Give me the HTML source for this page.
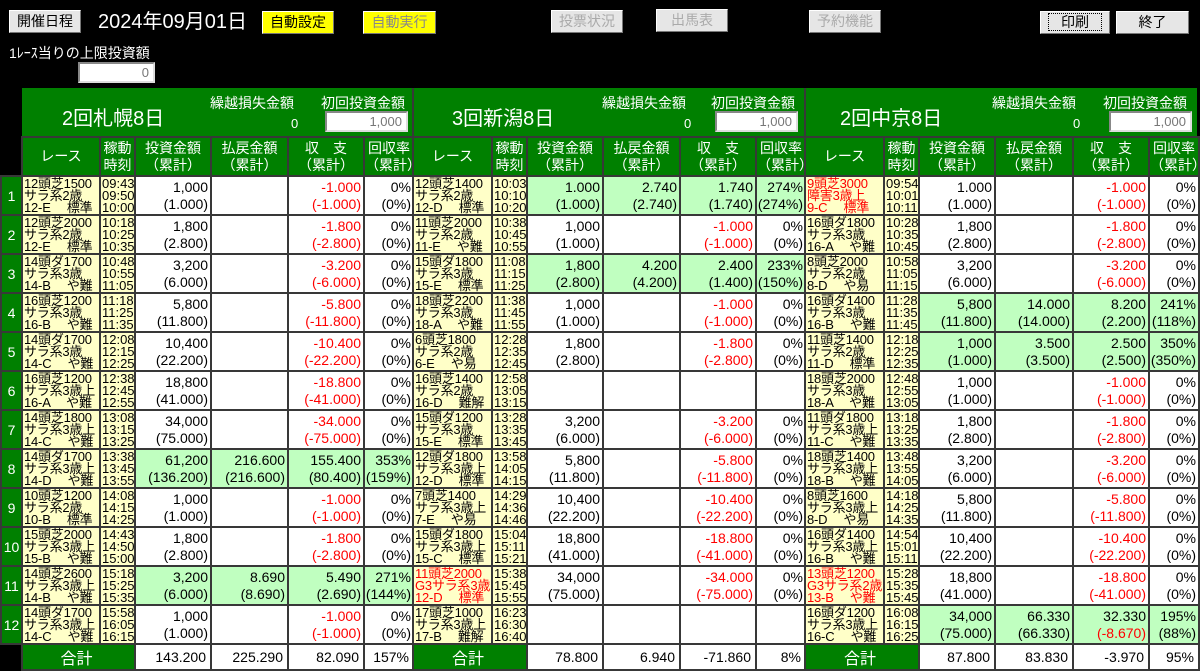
<!DOCTYPE html>
<html><head><meta charset="utf-8"><style>
*{box-sizing:border-box;margin:0;padding:0}
body{width:1200px;height:668px;background:#000;position:relative;overflow:hidden;font-family:"Liberation Sans","Noto Sans CJK JP",sans-serif;color:#000}
.btn{position:absolute;height:23px;background:#e6e6e6;border:1px solid #fff;border-right-color:#777;border-bottom-color:#777;font-size:14px;text-align:center;line-height:21px;color:#000}
.dis{color:#aaa}
.yel{background:#ffff00}
.abs{position:absolute}
.inp{position:absolute;background:#fff;border:2px solid #888;border-right-color:#ddd;border-bottom-color:#ddd;text-align:right;font-size:13px;color:#777;padding-right:4px;line-height:17px}
.hdr{position:absolute;top:88px;height:50px;background:#008000;color:#fff}
table{position:absolute;border-collapse:collapse;table-layout:fixed}
td{border:2px solid #383838;padding:0;vertical-align:middle;overflow:hidden;white-space:nowrap}
tr{height:39px}
.h td{background:#008000;color:#fff;font-size:14px;line-height:17px;text-align:center}
.rc{background:#ffffc8;font-size:13px;line-height:12px;padding-left:1px;text-align:left;letter-spacing:-0.2px}
.tm{background:#ffffc8;font-size:13px;line-height:12px;padding-left:1px}
.n{background:#fff;font-size:14px;line-height:17px;text-align:right;padding-right:2px}
.g .n{background:#c0ffc0}
.red,.red td{color:#f00}
.rc.red{color:#f00}
.t{height:24px}
.t td{background:#fff;font-size:14px;text-align:right;padding-right:4px}
.t td.tl{background:#008000;color:#fff;text-align:center;font-size:16px}
.num td{background:#008000;color:#fff;font-size:14px;text-align:center}
</style></head><body>
<div class="btn" style="left:9px;top:10px;width:72px">開催日程</div>
<div class="abs" style="left:98px;top:9px;color:#fff;font-size:20px;line-height:26px">2024年09月01日</div>
<div class="btn yel" style="left:262px;top:11px;width:72px">自動設定</div>
<div class="btn yel dis" style="left:363px;top:11px;width:73px;color:#888">自動実行</div>
<div class="btn dis" style="left:551px;top:10px;width:72px">投票状況</div>
<div class="btn dis" style="left:656px;top:9px;width:72px">出馬表</div>
<div class="btn dis" style="left:809px;top:10px;width:72px">予約機能</div>
<div class="btn" style="left:1040px;top:11px;width:70px"><span style="border:1px dotted #000;padding:0 12px">印刷</span></div>
<div class="btn" style="left:1116px;top:11px;width:73px">終了</div>
<div class="abs" style="left:9px;top:43px;color:#fff;font-size:14px">1ﾚｰｽ当りの上限投資額</div>
<div class="inp" style="left:78px;top:62px;width:77px;height:21px">0</div>

<div class="hdr" style="left:22px;width:1175px"></div>
<div class="abs" style="left:412px;top:88px;width:2px;height:88px;background:#383838"></div>
<div class="abs" style="left:804px;top:88px;width:2px;height:88px;background:#383838"></div>

<div class="abs" style="left:62px;top:102px;color:#fff;font-size:20px">2回札幌8日</div>
<div class="abs" style="left:210px;top:93px;color:#fff;font-size:14px">繰越損失金額</div>
<div class="abs" style="left:291px;top:116px;color:#fff;font-size:13px">0</div>
<div class="abs" style="left:321px;top:93px;color:#fff;font-size:14px">初回投資金額</div>
<div class="inp" style="left:325px;top:111px;width:83px;height:21px">1,000</div>

<div class="abs" style="left:452px;top:102px;color:#fff;font-size:20px">3回新潟8日</div>
<div class="abs" style="left:602px;top:93px;color:#fff;font-size:14px">繰越損失金額</div>
<div class="abs" style="left:684px;top:116px;color:#fff;font-size:13px">0</div>
<div class="abs" style="left:711px;top:93px;color:#fff;font-size:14px">初回投資金額</div>
<div class="inp" style="left:715px;top:111px;width:83px;height:21px">1,000</div>

<div class="abs" style="left:840px;top:102px;color:#fff;font-size:20px">2回中京8日</div>
<div class="abs" style="left:992px;top:93px;color:#fff;font-size:14px">繰越損失金額</div>
<div class="abs" style="left:1073px;top:116px;color:#fff;font-size:13px">0</div>
<div class="abs" style="left:1103px;top:93px;color:#fff;font-size:14px">初回投資金額</div>
<div class="inp" style="left:1109px;top:111px;width:83px;height:21px">1,000</div>

<table style="left:0;top:175px;width:21px" class="num">
<colgroup><col style="width:21px"></colgroup>
<tr><td>1</td></tr><tr><td>2</td></tr><tr><td>3</td></tr><tr><td>4</td></tr><tr><td>5</td></tr><tr><td>6</td></tr><tr><td>7</td></tr><tr><td>8</td></tr><tr><td>9</td></tr><tr><td>10</td></tr><tr><td>11</td></tr><tr><td>12</td></tr>
</table>

<!-- Block 1 -->
<table style="left:21px;top:136px;width:392px">
<colgroup><col style="width:78px"><col style="width:35px"><col style="width:76px"><col style="width:77px"><col style="width:76px"><col style="width:50px"></colgroup>
<tr class="h"><td>レース</td><td>稼動<br>時刻</td><td>投資金額<br>（累計）</td><td>払戻金額<br>（累計）</td><td>収　支<br>（累計）</td><td>回収率<br>（累計）</td></tr>
<tr><td class="rc">12頭芝1500<br>サラ系2歳<br>12-E　 標準</td><td class="tm">09:43<br>09:50<br>10:00</td><td class="n">1,000<br>(1.000)</td><td class="n"></td><td class="n red">-1.000<br>(-1.000)</td><td class="n">0%<br>(0%)</td></tr>
<tr><td class="rc">12頭芝2000<br>サラ系2歳<br>12-E　 標準</td><td class="tm">10:18<br>10:25<br>10:35</td><td class="n">1,800<br>(2.800)</td><td class="n"></td><td class="n red">-1.800<br>(-2.800)</td><td class="n">0%<br>(0%)</td></tr>
<tr><td class="rc">14頭ダ1700<br>サラ系3歳<br>14-B　 や難</td><td class="tm">10:48<br>10:55<br>11:05</td><td class="n">3,200<br>(6.000)</td><td class="n"></td><td class="n red">-3.200<br>(-6.000)</td><td class="n">0%<br>(0%)</td></tr>
<tr><td class="rc">16頭芝1200<br>サラ系3歳<br>16-B　 や難</td><td class="tm">11:18<br>11:25<br>11:35</td><td class="n">5,800<br>(11.800)</td><td class="n"></td><td class="n red">-5.800<br>(-11.800)</td><td class="n">0%<br>(0%)</td></tr>
<tr><td class="rc">14頭ダ1700<br>サラ系3歳<br>14-C　 や難</td><td class="tm">12:08<br>12:15<br>12:25</td><td class="n">10,400<br>(22.200)</td><td class="n"></td><td class="n red">-10.400<br>(-22.200)</td><td class="n">0%<br>(0%)</td></tr>
<tr><td class="rc">16頭芝1200<br>サラ系3歳上<br>16-A　 や難</td><td class="tm">12:38<br>12:45<br>12:55</td><td class="n">18,800<br>(41.000)</td><td class="n"></td><td class="n red">-18.800<br>(-41.000)</td><td class="n">0%<br>(0%)</td></tr>
<tr><td class="rc">14頭芝1800<br>サラ系3歳上<br>14-C　 や難</td><td class="tm">13:08<br>13:15<br>13:25</td><td class="n">34,000<br>(75.000)</td><td class="n"></td><td class="n red">-34.000<br>(-75.000)</td><td class="n">0%<br>(0%)</td></tr>
<tr class="g"><td class="rc">14頭ダ1700<br>サラ系3歳上<br>14-D　 や難</td><td class="tm">13:38<br>13:45<br>13:55</td><td class="n">61,200<br>(136.200)</td><td class="n">216.600<br>(216.600)</td><td class="n">155.400<br>(80.400)</td><td class="n">353%<br>(159%)</td></tr>
<tr><td class="rc">10頭芝1200<br>サラ系2歳<br>10-B　 標準</td><td class="tm">14:08<br>14:15<br>14:25</td><td class="n">1,000<br>(1.000)</td><td class="n"></td><td class="n red">-1.000<br>(-1.000)</td><td class="n">0%<br>(0%)</td></tr>
<tr><td class="rc">15頭芝2000<br>サラ系3歳上<br>15-B　 や難</td><td class="tm">14:43<br>14:50<br>15:00</td><td class="n">1,800<br>(2.800)</td><td class="n"></td><td class="n red">-1.800<br>(-2.800)</td><td class="n">0%<br>(0%)</td></tr>
<tr class="g"><td class="rc">14頭芝2600<br>サラ系3歳上<br>14-B　 や難</td><td class="tm">15:18<br>15:25<br>15:35</td><td class="n">3,200<br>(6.000)</td><td class="n">8.690<br>(8.690)</td><td class="n">5.490<br>(2.690)</td><td class="n">271%<br>(144%)</td></tr>
<tr><td class="rc">14頭ダ1700<br>サラ系3歳上<br>14-C　 や難</td><td class="tm">15:58<br>16:05<br>16:15</td><td class="n">1,000<br>(1.000)</td><td class="n"></td><td class="n red">-1.000<br>(-1.000)</td><td class="n">0%<br>(0%)</td></tr>
<tr class="t"><td class="tl" colspan="2">合計</td><td>143.200</td><td>225.290</td><td>82.090</td><td>157%</td></tr>
</table>

<!-- Block 2 -->
<table style="left:412px;top:136px;width:393px">
<colgroup><col style="width:79px"><col style="width:35px"><col style="width:76px"><col style="width:77px"><col style="width:76px"><col style="width:50px"></colgroup>
<tr class="h"><td>レース</td><td>稼動<br>時刻</td><td>投資金額<br>（累計）</td><td>払戻金額<br>（累計）</td><td>収　支<br>（累計）</td><td>回収率<br>（累計）</td></tr>
<tr class="g"><td class="rc">12頭芝1400<br>サラ系2歳<br>12-D　 標準</td><td class="tm">10:03<br>10:10<br>10:20</td><td class="n">1.000<br>(1.000)</td><td class="n">2.740<br>(2.740)</td><td class="n">1.740<br>(1.740)</td><td class="n">274%<br>(274%)</td></tr>
<tr><td class="rc">11頭芝2000<br>サラ系2歳<br>11-E　 や難</td><td class="tm">10:38<br>10:45<br>10:55</td><td class="n">1,000<br>(1.000)</td><td class="n"></td><td class="n red">-1.000<br>(-1.000)</td><td class="n">0%<br>(0%)</td></tr>
<tr class="g"><td class="rc">15頭ダ1800<br>サラ系3歳<br>15-E　 標準</td><td class="tm">11:08<br>11:15<br>11:25</td><td class="n">1,800<br>(2.800)</td><td class="n">4.200<br>(4.200)</td><td class="n">2.400<br>(1.400)</td><td class="n">233%<br>(150%)</td></tr>
<tr><td class="rc">18頭芝2200<br>サラ系3歳<br>18-A　 や難</td><td class="tm">11:38<br>11:45<br>11:55</td><td class="n">1,000<br>(1.000)</td><td class="n"></td><td class="n red">-1.000<br>(-1.000)</td><td class="n">0%<br>(0%)</td></tr>
<tr><td class="rc">6頭芝1800<br>サラ系2歳<br>6-E　 や易</td><td class="tm">12:28<br>12:35<br>12:45</td><td class="n">1,800<br>(2.800)</td><td class="n"></td><td class="n red">-1.800<br>(-2.800)</td><td class="n">0%<br>(0%)</td></tr>
<tr><td class="rc">16頭芝1400<br>サラ系2歳<br>16-D　 難解</td><td class="tm">12:58<br>13:05<br>13:15</td><td class="n"></td><td class="n"></td><td class="n"></td><td class="n"></td></tr>
<tr><td class="rc">15頭ダ1200<br>サラ系3歳<br>15-E　 標準</td><td class="tm">13:28<br>13:35<br>13:45</td><td class="n">3,200<br>(6.000)</td><td class="n"></td><td class="n red">-3.200<br>(-6.000)</td><td class="n">0%<br>(0%)</td></tr>
<tr><td class="rc">12頭ダ1800<br>サラ系3歳上<br>12-D　 標準</td><td class="tm">13:58<br>14:05<br>14:15</td><td class="n">5,800<br>(11.800)</td><td class="n"></td><td class="n red">-5.800<br>(-11.800)</td><td class="n">0%<br>(0%)</td></tr>
<tr><td class="rc">7頭芝1400<br>サラ系3歳上<br>7-E　 や易</td><td class="tm">14:29<br>14:36<br>14:46</td><td class="n">10,400<br>(22.200)</td><td class="n"></td><td class="n red">-10.400<br>(-22.200)</td><td class="n">0%<br>(0%)</td></tr>
<tr><td class="rc">15頭ダ1800<br>サラ系3歳上<br>15-C　 標準</td><td class="tm">15:04<br>15:11<br>15:21</td><td class="n">18,800<br>(41.000)</td><td class="n"></td><td class="n red">-18.800<br>(-41.000)</td><td class="n">0%<br>(0%)</td></tr>
<tr><td class="rc red">11頭芝2000<br>G3サラ系3歳<br>12-D　 標準</td><td class="tm">15:38<br>15:45<br>15:55</td><td class="n">34,000<br>(75.000)</td><td class="n"></td><td class="n red">-34.000<br>(-75.000)</td><td class="n">0%<br>(0%)</td></tr>
<tr><td class="rc">17頭芝1000<br>サラ系3歳上<br>17-B　 難解</td><td class="tm">16:23<br>16:30<br>16:40</td><td class="n"></td><td class="n"></td><td class="n"></td><td class="n"></td></tr>
<tr class="t"><td class="tl" colspan="2">合計</td><td>78.800</td><td>6.940</td><td>-71.860</td><td>8%</td></tr>
</table>

<!-- Block 3 -->
<table style="left:804px;top:136px;width:394px">
<colgroup><col style="width:79px"><col style="width:35px"><col style="width:76px"><col style="width:78px"><col style="width:76px"><col style="width:50px"></colgroup>
<tr class="h"><td>レース</td><td>稼動<br>時刻</td><td>投資金額<br>（累計）</td><td>払戻金額<br>（累計）</td><td>収　支<br>（累計）</td><td>回収率<br>（累計）</td></tr>
<tr><td class="rc red">9頭芝3000<br>障害3歳上<br>9-C　 標準</td><td class="tm">09:54<br>10:01<br>10:11</td><td class="n">1.000<br>(1.000)</td><td class="n"></td><td class="n red">-1.000<br>(-1.000)</td><td class="n">0%<br>(0%)</td></tr>
<tr><td class="rc">16頭ダ1800<br>サラ系3歳<br>16-A　 や難</td><td class="tm">10:28<br>10:35<br>10:45</td><td class="n">1,800<br>(2.800)</td><td class="n"></td><td class="n red">-1.800<br>(-2.800)</td><td class="n">0%<br>(0%)</td></tr>
<tr><td class="rc">8頭芝2000<br>サラ系2歳<br>8-D　 や易</td><td class="tm">10:58<br>11:05<br>11:15</td><td class="n">3,200<br>(6.000)</td><td class="n"></td><td class="n red">-3.200<br>(-6.000)</td><td class="n">0%<br>(0%)</td></tr>
<tr class="g"><td class="rc">16頭ダ1400<br>サラ系3歳<br>16-B　 や難</td><td class="tm">11:28<br>11:35<br>11:45</td><td class="n">5,800<br>(11.800)</td><td class="n">14.000<br>(14.000)</td><td class="n">8.200<br>(2.200)</td><td class="n">241%<br>(118%)</td></tr>
<tr class="g"><td class="rc">11頭芝1400<br>サラ系2歳<br>11-D　 標準</td><td class="tm">12:18<br>12:25<br>12:35</td><td class="n">1,000<br>(1.000)</td><td class="n">3.500<br>(3.500)</td><td class="n">2.500<br>(2.500)</td><td class="n">350%<br>(350%)</td></tr>
<tr><td class="rc">18頭芝2000<br>サラ系3歳<br>18-A　 や難</td><td class="tm">12:48<br>12:55<br>13:05</td><td class="n">1,000<br>(1.000)</td><td class="n"></td><td class="n red">-1.000<br>(-1.000)</td><td class="n">0%<br>(0%)</td></tr>
<tr><td class="rc">11頭ダ1800<br>サラ系3歳上<br>11-C　 や難</td><td class="tm">13:18<br>13:25<br>13:35</td><td class="n">1,800<br>(2.800)</td><td class="n"></td><td class="n red">-1.800<br>(-2.800)</td><td class="n">0%<br>(0%)</td></tr>
<tr><td class="rc">18頭芝1400<br>サラ系3歳上<br>18-B　 や難</td><td class="tm">13:48<br>13:55<br>14:05</td><td class="n">3,200<br>(6.000)</td><td class="n"></td><td class="n red">-3.200<br>(-6.000)</td><td class="n">0%<br>(0%)</td></tr>
<tr><td class="rc">8頭芝1600<br>サラ系3歳上<br>8-D　 や易</td><td class="tm">14:18<br>14:25<br>14:35</td><td class="n">5,800<br>(11.800)</td><td class="n"></td><td class="n red">-5.800<br>(-11.800)</td><td class="n">0%<br>(0%)</td></tr>
<tr><td class="rc">16頭ダ1400<br>サラ系3歳上<br>16-B　 や難</td><td class="tm">14:54<br>15:01<br>15:11</td><td class="n">10,400<br>(22.200)</td><td class="n"></td><td class="n red">-10.400<br>(-22.200)</td><td class="n">0%<br>(0%)</td></tr>
<tr><td class="rc red">13頭芝1200<br>G3サラ系2歳<br>13-B　 や難</td><td class="tm">15:28<br>15:35<br>15:45</td><td class="n">18,800<br>(41.000)</td><td class="n"></td><td class="n red">-18.800<br>(-41.000)</td><td class="n">0%<br>(0%)</td></tr>
<tr class="g"><td class="rc">16頭ダ1200<br>サラ系3歳上<br>16-C　 や難</td><td class="tm">16:08<br>16:15<br>16:25</td><td class="n">34,000<br>(75.000)</td><td class="n">66.330<br>(66.330)</td><td class="n">32.330<br><span style="color:#f00">(-8.670)</span></td><td class="n">195%<br>(88%)</td></tr>
<tr class="t"><td class="tl" colspan="2">合計</td><td>87.800</td><td>83.830</td><td>-3.970</td><td>95%</td></tr>
</table>
</body></html>
